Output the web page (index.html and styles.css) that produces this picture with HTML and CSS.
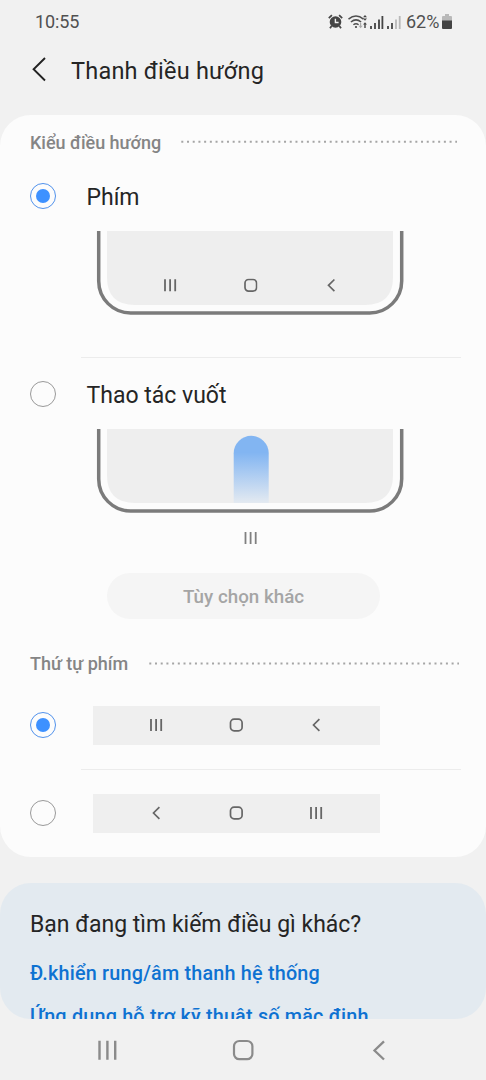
FILE: index.html
```html
<!DOCTYPE html>
<html lang="vi">
<head>
<meta charset="utf-8">
<title>Thanh điều hướng</title>
<link rel="stylesheet" href="styles.css">
</head>
<body>
<svg class="defs" width="0" height="0" aria-hidden="true">
  <symbol id="recents" viewBox="0 0 14 14"><path d="M2 1v12M7.100 1v12M12.200 1v12" stroke="currentColor" stroke-width="1.800" fill="none"/></symbol>
  <symbol id="home" viewBox="0 0 14 14"><rect x="1.500" y="1.200" width="11.600" height="11.600" rx="3.600" stroke="currentColor" stroke-width="1.700" fill="none"/></symbol>
  <symbol id="back" viewBox="0 0 14 14"><path d="M10.400 1.200 4.500 7l5.900 5.800" stroke="currentColor" stroke-width="1.700" fill="none"/></symbol>
</svg>
<div class="screen">
  <div class="status">
    <span class="clock">10:55</span>
    <svg class="indicators" width="76" height="18" viewBox="0 0 76 18">
      <g fill="#454545" stroke="#454545">
        <circle cx="7.500" cy="9" r="5.800" stroke="none"/>
        <path d="M.8 5.200 3.900 2.100M14.200 5.200 11.100 2.100" stroke-width="1.700"/>
        <path d="M3.600 13 2 15.200M11.400 13l1.600 2.200" stroke-width="1.800"/>
        <path d="M7.400 5.800v3.700h3.200" stroke="#f1f1f1" stroke-width="1.400" fill="none"/>
      </g>
      <g fill="none" stroke="#505050" stroke-width="1.500">
        <path d="M20.500 6.100q7.500-6.300 15 0M22.900 9q5.100-4.300 10.200 0M25.400 11.800q2.600-2.200 5.200 0"/>
      </g>
      <circle cx="28" cy="14" r="1.100" fill="#454545"/>
      <path d="m35 4.300 2-2.300 2 2.300zM35 5.500l2 2.300 2-2.300zM35 11.500l2-2.300 2 2.300zM36.300 11h1.400v4h-1.400z" fill="#454545"/>
      <path d="M30.500 12.700l2.100 2.500 2.100-2.500z" fill="#aaa"/><path d="M32 10v3h1.200v-3z" fill="#aaa"/>
      <path d="M43 13v3M47 10v6M51 6.500V16M54.400 3v13" stroke="#454545" stroke-width="1.800"/>
      <path d="M60 13v3M64 10v6" stroke="#454545" stroke-width="1.800"/>
      <path d="M68 6.500V16M71.700 3v13" stroke="#b8b8b8" stroke-width="1.800"/>
    </svg>
    <span class="percent">62%</span>
    <svg class="battery" width="10" height="16" viewBox="0 0 10 16">
      <path d="M3 0h4v2h2q1 0 1 1v4H0V3q0-1 1-1h2z" fill="#b9b9b9"/>
      <path d="M0 6.500h10V14q0 1-1 1H1q-1 0-1-1z" fill="#444"/>
    </svg>
  </div>
  <header class="header">
    <svg width="16" height="26" viewBox="0 0 16 26"><path d="M14 1 2.600 12.300 14 23.500" fill="none" stroke="#222" stroke-width="1.900"/></svg>
    <h1 class="title">Thanh điều hướng</h1>
  </header>

  <main class="card">
    <div class="section">
      <h2 class="section-title">Kiểu điều hướng</h2>
      <svg class="dots" width="279" height="4"><path d="M.3 1.700H276" stroke="#a5a5a5" stroke-width="2" stroke-dasharray="2 3.708"/></svg>
    </div>
    <div class="option">
      <span class="radio on"></span><span class="label">Phím</span>
    </div>
    <svg class="phone" width="308" height="85" viewBox="0 0 308 85">
      <path d="M11 0h286v46q0 28-28 28H39Q11 74 11 46z" fill="#eee"/>
      <path d="M2.700 0v50a32 32 0 0 0 32 32h239a32 32 0 0 0 32-32V0" fill="none" stroke="#7b7b7b" stroke-width="3.500"/>
      <g color="#666"><use href="#recents" x="67" y="47.300" width="14" height="14"/><use href="#home" x="147.500" y="47.300" width="14" height="14"/><use href="#back" x="228" y="47.300" width="14" height="14"/></g>
    </svg>
    <div class="divider first"></div>
    <div class="option second">
      <span class="radio"></span><span class="label">Thao tác vuốt</span>
    </div>
    <svg class="phone" width="308" height="85" viewBox="0 0 308 85">
      <defs><linearGradient id="swipe" x1="0" y1="0" x2="0" y2="1"><stop offset=".25" stop-color="#82b5f2"/><stop offset="1" stop-color="#e4eaf1"/></linearGradient></defs>
      <path d="M11 0h286v46q0 28-28 28H39Q11 74 11 46z" fill="#eee"/>
      <path d="M137.700 74V24.300a17.500 17.500 0 0 1 35 0V74z" fill="url(#swipe)"/>
      <path d="M2.700 0v50a32 32 0 0 0 32 32h239a32 32 0 0 0 32-32V0" fill="none" stroke="#7b7b7b" stroke-width="3.500"/>
    </svg>
    <svg class="hint" width="15" height="14"><use href="#recents" x=".5" width="14" height="14"/></svg>
    <div class="more"><span>Tùy chọn khác</span></div>
    <div class="section order">
      <h2 class="section-title">Thứ tự phím</h2>
      <svg class="dots" width="312" height="4"><path d="M.3 1.500H310" stroke="#a5a5a5" stroke-width="2" stroke-dasharray="2 3.704"/></svg>
    </div>
    <div class="keys">
      <span class="radio on"></span>
      <div class="bar">
        <svg width="14" height="14"><use href="#recents" width="14" height="14"/></svg>
        <svg width="14" height="14"><use href="#home" width="14" height="14"/></svg>
        <svg width="14" height="14"><use href="#back" width="14" height="14"/></svg>
      </div>
    </div>
    <div class="divider between"></div>
    <div class="keys">
      <span class="radio"></span>
      <div class="bar">
        <svg width="14" height="14"><use href="#back" width="14" height="14"/></svg>
        <svg width="14" height="14"><use href="#home" width="14" height="14"/></svg>
        <svg width="14" height="14"><use href="#recents" width="14" height="14"/></svg>
      </div>
    </div>
  </main>

  <section class="related">
    <h2 class="question">Bạn đang tìm kiếm điều gì khác?</h2>
    <a class="link">Đ.khiển rung/âm thanh hệ thống</a>
    <a class="link last">Ứng dụng hỗ trợ kỹ thuật số mặc định</a>
  </section>

  <nav class="nav">
    <svg width="22" height="22" viewBox="0 0 22 22"><path d="M3.500 1.700v19M11.400 1.700v19M19.200 1.700v19" stroke="#8b8b8b" stroke-width="2.400"/></svg>
    <svg width="22" height="22" viewBox="0 0 22 22"><rect x="2" y="2" width="18.400" height="18.200" rx="5.300" fill="none" stroke="#8b8b8b" stroke-width="2.200"/></svg>
    <svg width="22" height="22" viewBox="0 0 22 22"><path d="M16 2.300 6.500 11.500l9.500 9" fill="none" stroke="#8b8b8b" stroke-width="2.300"/></svg>
  </nav>
</div>
</body>
</html>
```
FILE: styles.css
```css
* { box-sizing: border-box; }
body { margin: 0; background: #f1f1f1; font-family: Roboto, "Noto Sans", sans-serif; color: #252525; }
svg { display: block; flex: none; }
h1, h2 { margin: 0; font-weight: 400; }
span, h1, h2, a { white-space: nowrap; }
.defs { position: absolute; }
.screen { width: 486px; height: 1080px; overflow: hidden; display: flex; flex-direction: column; }
.status { height: 43px; flex: none; display: flex; align-items: center; padding: 0 34px 0 35px; color: #505050; font-size: 18px; }
.clock { flex: 1; letter-spacing: -.1px; }
.indicators { margin-right: 2px; }
.percent { width: 35px; }
.battery { margin-left: 1px; }
.header { height: 72px; flex: none; display: flex; align-items: center; padding: 0 0 18px 31px; }
.title { font-size: 23.500px; letter-spacing: .22px; margin: 2px 0 0 24px; }
.card { height: 742px; flex: none; background: #fcfcfc; border-radius: 31px; display: flex; flex-direction: column; }
.section { height: 54px; flex: none; display: flex; align-items: center; justify-content: space-between; padding: 0 26px 0 30px; }
.section-title { font-size: 18px; font-weight: 500; letter-spacing: -.03px; color: #858585; }
.option { height: 54px; flex: none; display: flex; align-items: center; padding-left: 30px; gap: 30.500px; }
.option .radio { margin-top: -1px; }
.label { font-size: 23px; margin-top: 2px; }
.radio { width: 26px; height: 26px; flex: none; border: 1.500px solid #999; border-radius: 50%; display: flex; align-items: center; justify-content: center; }
.radio.on { border-color: #5192ec; }
.radio.on::after { content: ""; width: 14px; height: 14px; border-radius: 50%; background: #3e91ff; }
.phone { margin: 8px 0 0 96px; }
.divider { height: 1px; flex: none; background: #ececec; margin-left: 81px; margin-right: 25px; }
.divider.first { margin-top: 41px; }
.option.second { margin-top: 9px; }
.hint { color: #808080; margin: 17px 0 0 243px; }
.more { width: 273px; height: 46px; flex: none; margin: 28px 0 0 107px; border-radius: 23px; background: #f5f5f5; display: flex; align-items: center; justify-content: center; padding-top: 2px; font-size: 18.800px; font-weight: 500; color: #a5a5a5; }
.section.order { margin-top: 18px; height: 54px; padding-right: 25px; }
.order .section-title { margin-top: -1px; }
.keys { height: 39px; flex: none; display: flex; align-items: center; gap: 37px; padding-left: 30px; }
.keys .radio { margin-top: -1px; }
.section.order + .keys { margin-top: 15px; }
.bar { width: 287px; height: 39px; background: #efefef; color: #666; display: flex; align-items: center; justify-content: space-between; padding: 0 57px 1px 56px; }
.divider.between { margin-top: 24px; margin-bottom: 24px; }
.related { height: 136px; flex: none; margin-top: 26px; background: #e3eaf0; border-radius: 31px; overflow: hidden; padding: 26px 30px 0; display: flex; flex-direction: column; align-items: flex-start; }
.question { font-size: 23px; line-height: 32px; }
.link { font-size: 19.800px; letter-spacing: .2px; line-height: 28px; font-weight: 500; color: #0e72d2; margin-top: 19px; }
.link.last { margin-top: 15px; }
.nav { height: 61px; flex: none; display: flex; justify-content: space-between; align-items: center; padding: 1px 96px 0; }
```
